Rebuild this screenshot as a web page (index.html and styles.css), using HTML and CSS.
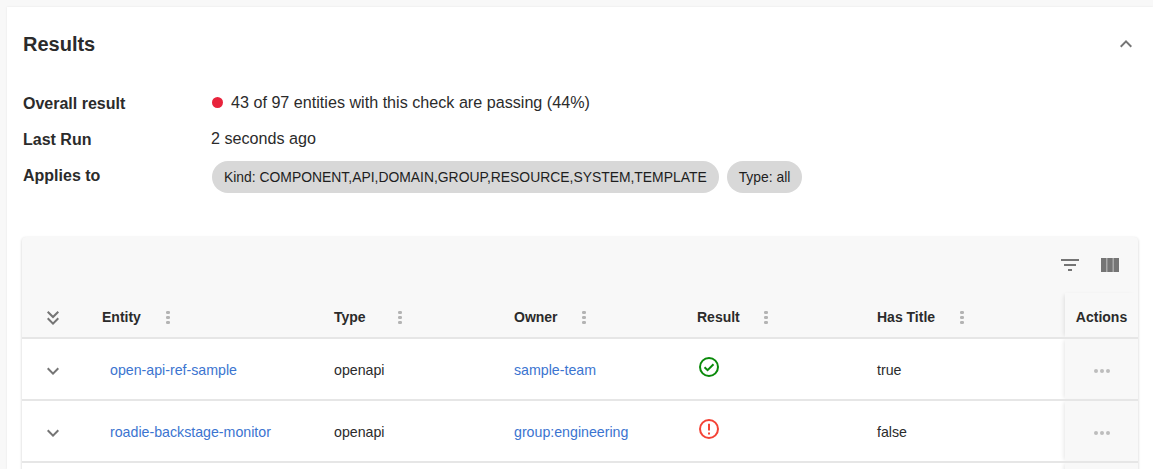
FILE: index.html
```html
<!DOCTYPE html>
<html lang="en">

<head>
    <meta charset="UTF-8">
    <meta name="viewport" content="width=device-width, initial-scale=1.0">
    <title>Results</title>
    <link rel="stylesheet" href="styles.css">
</head>

<body>
    <section class="card">
        <header class="card-header">
            <h2>Results</h2>
            <svg class="collapse-icon" viewBox="0 0 24 24" width="24" height="24">
                <path d="M7.41 15.41 12 10.83l4.59 4.58L18 14l-6-6-6 6z" />
            </svg>
        </header>

        <dl class="summary">
            <dt>Overall result</dt>
            <dd><span class="status-dot"></span>43 of 97 entities with this check are passing (44%)</dd>
            <dt>Last Run</dt>
            <dd>2 seconds ago</dd>
            <dt>Applies to</dt>
            <dd class="chips">
                <span class="chip">Kind: COMPONENT,API,DOMAIN,GROUP,RESOURCE,SYSTEM,TEMPLATE</span>
                <span class="chip">Type: all</span>
            </dd>
        </dl>

        <div class="table-paper">
            <div class="toolbar">
                <svg class="tool-icon" viewBox="0 0 24 24" width="24" height="24">
                    <path d="M10 18h4v-2h-4v2zM3 6v2h18V6H3zm3 7h12v-2H6v2z" />
                </svg>
                <svg class="tool-icon" viewBox="0 0 24 24" width="24" height="24">
                    <path d="M3 5h5.6v14H3zM9.2 5h5.6v14H9.2zM15.4 5H21v14h-5.6z" />
                </svg>
            </div>
            <table class="results-table">
                <colgroup>
                    <col class="col-expand">
                    <col class="col-entity">
                    <col class="col-type">
                    <col class="col-owner">
                    <col class="col-result">
                    <col class="col-title">
                    <col class="col-actions">
                </colgroup>
                <thead>
                    <tr>
                        <th class="cell-expand">
                            <svg class="row-icon" viewBox="0 0 24 24" width="24" height="24">
                                <path d="M18 6.41 16.59 5 12 9.58 7.41 5 6 6.41l6 6z" />
                                <path d="m18 13-1.41-1.41L12 16.17l-4.59-4.58L6 13l6 6z" />
                            </svg>
                        </th>
                        <th><span class="head"><span class="head-label">Entity</span><span class="kebab"></span></span></th>
                        <th><span class="head"><span class="head-label">Type</span><span class="kebab"></span></span></th>
                        <th><span class="head"><span class="head-label">Owner</span><span class="kebab"></span></span></th>
                        <th><span class="head"><span class="head-label">Result</span><span class="kebab"></span></span></th>
                        <th><span class="head"><span class="head-label">Has Title</span><span class="kebab"></span></span></th>
                        <th class="cell-actions">Actions</th>
                    </tr>
                </thead>
                <tbody>
                    <tr>
                        <td class="cell-expand">
                            <svg class="row-icon" viewBox="0 0 24 24" width="24" height="24">
                                <path d="M16.59 8.59 12 13.17 7.41 8.59 6 10l6 6 6-6z" />
                            </svg>
                        </td>
                        <td class="cell-entity"><a href="#">open-api-ref-sample</a></td>
                        <td>openapi</td>
                        <td><a href="#">sample-team</a></td>
                        <td>
                            <svg class="pass-icon" viewBox="0 0 24 24" width="24" height="24">
                                <circle cx="12" cy="12" r="9" />
                                <path d="m7.5 12.2 3.1 3 5.9-5.9" />
                            </svg>
                        </td>
                        <td>true</td>
                        <td class="cell-actions"><span class="dots"><i></i><i></i><i></i></span></td>
                    </tr>
                    <tr>
                        <td class="cell-expand">
                            <svg class="row-icon" viewBox="0 0 24 24" width="24" height="24">
                                <path d="M16.59 8.59 12 13.17 7.41 8.59 6 10l6 6 6-6z" />
                            </svg>
                        </td>
                        <td class="cell-entity"><a href="#">roadie-backstage-monitor</a></td>
                        <td>openapi</td>
                        <td><a href="#">group:engineering</a></td>
                        <td>
                            <svg class="fail-icon" viewBox="0 0 24 24" width="24" height="24">
                                <circle cx="12" cy="12" r="9" />
                                <path d="M12 6.8v6.6M12 15.4v2" />
                            </svg>
                        </td>
                        <td>false</td>
                        <td class="cell-actions"><span class="dots"><i></i><i></i><i></i></span></td>
                    </tr>
                    <tr>
                        <td class="cell-expand"></td>
                        <td></td>
                        <td></td>
                        <td></td>
                        <td></td>
                        <td></td>
                        <td class="cell-actions"></td>
                    </tr>
                </tbody>
            </table>
        </div>
    </section>
</body>

</html>
```

FILE: styles.css
```css
* {
    box-sizing: border-box;
}

html,
body {
    height: 100%;
    overflow: hidden;
}

body {
    margin: 0;
    padding: 7px 0 0 7px;
    background-color: #f8f8f8;
    color: #2b2b2b;
    font-family: "Liberation Sans", Arial, sans-serif;
    font-size: 14px;
}

.card {
    background-color: #ffffff;
    padding: 0 15px;
    height: 462px;
    overflow: hidden;
    box-shadow: 0 0 2px rgba(0, 0, 0, 0.08);
}

.card-header {
    display: flex;
    justify-content: space-between;
    align-items: center;
    height: 75px;
    padding-left: 1px;
}

.card-header h2 {
    margin: 0;
    font-size: 20px;
    font-weight: 700;
}

.collapse-icon {
    fill: #757575;
    margin-top: -2px;
}

.summary {
    display: grid;
    grid-template-columns: 189px 1fr;
    margin: 0;
    padding-top: 4px;
    font-size: 16.15px;
}

.summary dt {
    padding-left: 1px;
    font-size: 16px;
    font-weight: 700;
    height: 36px;
    line-height: 36px;
}

.summary dd {
    margin: 0;
    height: 36px;
    line-height: 32px;
}

.status-dot {
    display: inline-block;
    width: 11px;
    height: 11px;
    border-radius: 50%;
    background-color: #e8233c;
    margin: 0 8px 0 1px;
}

.chips {
    display: flex;
    gap: 8px;
    align-items: flex-start;
    padding: 3px 0 0 1px;
}

.chip {
    background-color: #d8d8d8;
    color: #1e1e1e;
    font-size: 13.9px;
    height: 32px;
    line-height: 32px;
    padding: 0 12px;
    border-radius: 16px;
}

.table-paper {
    margin-top: 43px;
    background-color: #f8f8f8;
    border-radius: 4px;
    box-shadow: 0 1px 3px rgba(0, 0, 0, 0.2);
}

.toolbar {
    display: flex;
    justify-content: flex-end;
    align-items: center;
    gap: 16px;
    height: 56px;
    padding-right: 16px;
}

.tool-icon {
    fill: #757575;
}

.results-table {
    width: 100%;
    border-collapse: collapse;
    table-layout: fixed;
    font-size: 14.2px;
}

.col-expand {
    width: 72px;
}

.col-entity {
    width: 232px;
}

.col-type {
    width: 180px;
}

.col-owner {
    width: 183px;
}

.col-result {
    width: 180px;
}

.col-title {
    width: 196px;
}

th,
td {
    padding: 0 8px;
    text-align: left;
    border-bottom: 2px solid #e6e6e6;
}

th {
    height: 45px;
    padding-top: 3px;
    font-size: 14px;
    font-weight: 700;
}

td {
    height: 62px;
    padding-top: 2px;
    background-color: #ffffff;
}

a {
    color: #3b74d0;
    text-decoration: none;
}

.head {
    display: flex;
    align-items: center;
    gap: 22.5px;
}

.head-label {
    min-width: 39px;
}

.kebab {
    width: 8px;
    height: 14px;
    background: radial-gradient(circle, #b4b4b4 1.7px, transparent 2px) center top / 8px 5px repeat-y;
}

.cell-expand {
    padding: 3px 0 0 19px;
}

th.cell-expand {
    padding-top: 6px;
}

.row-icon {
    display: block;
    fill: #757575;
}

.cell-entity {
    padding-left: 16px;
}

.pass-icon,
.fail-icon {
    display: block;
    fill: none;
    stroke-width: 2;
    margin-top: -6px;
}

.pass-icon {
    stroke: #0a8a0a;
}

.fail-icon {
    stroke: #f44336;
}

.cell-actions {
    padding: 3px 0 0;
    background-color: #f8f8f8;
    text-align: center;
    box-shadow: -3px 0 4px -2px rgba(0, 0, 0, 0.1);
}

.dots {
    display: flex;
    justify-content: center;
    gap: 2px;
}

.dots i {
    width: 4px;
    height: 4px;
    border-radius: 50%;
    background-color: #bdbdbd;
}
```
